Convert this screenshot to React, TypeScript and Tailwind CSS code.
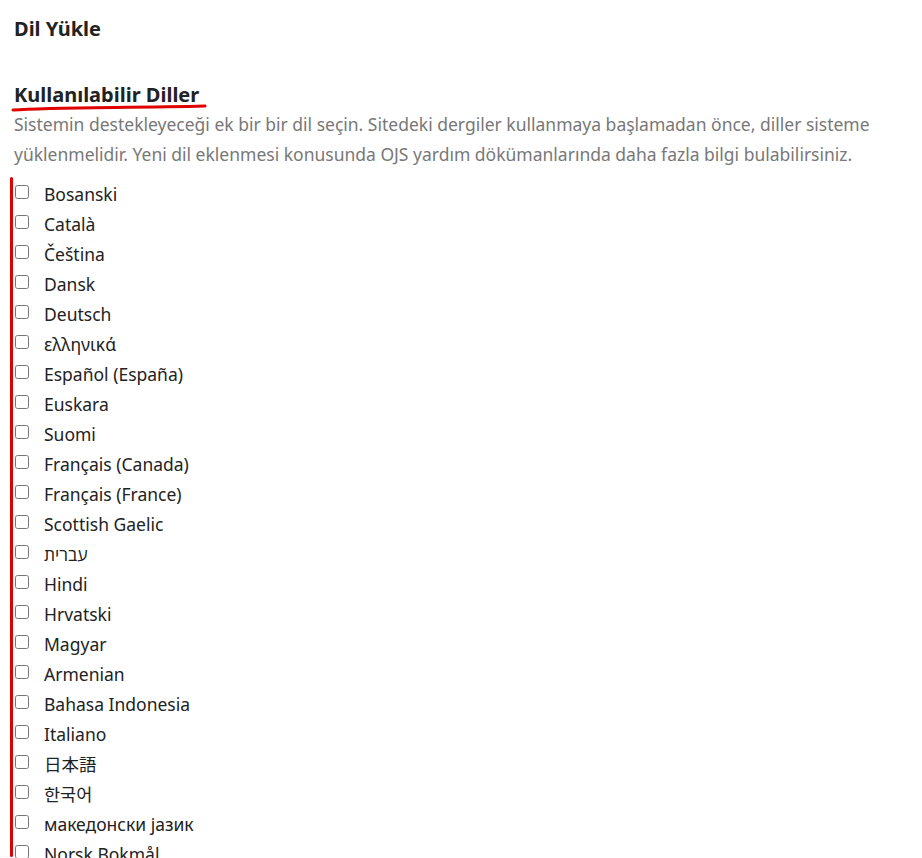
import React from 'react';

const languages = [
  'Bosanski',
  'Català',
  'Čeština',
  'Dansk',
  'Deutsch',
  'ελληνικά',
  'Español (España)',
  'Euskara',
  'Suomi',
  'Français (Canada)',
  'Français (France)',
  'Scottish Gaelic',
  'עברית',
  'Hindi',
  'Hrvatski',
  'Magyar',
  'Armenian',
  'Bahasa Indonesia',
  'Italiano',
  '日本語',
  '한국어',
  'македонски јазик',
  'Norsk Bokmål',
];

export default function App() {
  return (
    <div
      className="h-[858px] overflow-hidden bg-white pl-[14px] text-[#222]"
      style={{ fontFamily: '"Noto Sans", "Open Sans", "Noto Sans CJK JP", "Noto Sans CJK KR", sans-serif' }}
    >
      <h2 className="pt-[15px] text-[20px] font-bold leading-[28px] text-[#222]">Dil Yükle</h2>

      <div className="relative mt-[38px] inline-block">
        <h3 className="text-[20px] font-bold leading-[28px] text-[#222]">Kullanılabilir Diller</h3>
        <svg className="absolute -left-[3px] top-[22px]" width="198" height="10" viewBox="0 0 198 10">
          <path d="M2 7 C 40 4, 120 5, 194 3" stroke="#e00000" strokeWidth="3" fill="none" strokeLinecap="round" />
        </svg>
      </div>

      <p className="max-w-[880px] text-[17.5px] leading-[30px] text-[#787878]">
        Sistemin destekleyeceği ek bir bir dil seçin. Sitedeki dergiler kullanmaya başlamadan önce, diller sisteme
        yüklenmelidir. Yeni dil eklenmesi konusunda OJS yardım dökümanlarında daha fazla bilgi bulabilirsiniz.
      </p>

      <div className="relative mt-[10px]">
        <div className="absolute -left-[4px] top-[-2px] h-[680px] w-[3px] rounded-full bg-[#e00000]" />
        <ul className="flex flex-col">
          {languages.map((lang) => (
            <li key={lang} className="flex h-[30px] items-center">
              <input type="checkbox" className="ml-[1px] h-[14px] w-[14px] -translate-y-[2px]" />
              <span className="ml-[15px] text-[17.5px] leading-[30px] text-[#222]">{lang}</span>
            </li>
          ))}
        </ul>
      </div>
    </div>
  );
}
